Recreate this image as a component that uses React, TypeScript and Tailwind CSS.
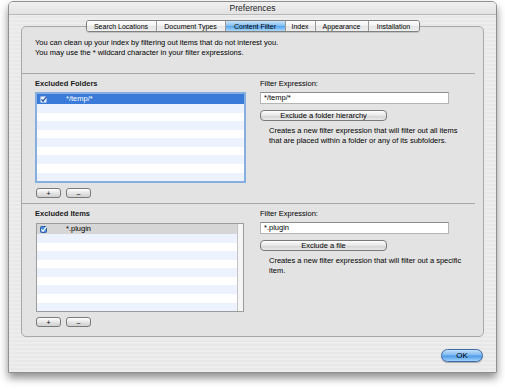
import React from "react";

const tabs = [
  { label: "Search Locations", w: "w-[69px]" },
  { label: "Document Types", w: "w-[69px]" },
  { label: "Content Filter", w: "w-[60px]", active: true },
  { label: "Index", w: "w-[30px]" },
  { label: "Appearance", w: "w-[53px]" },
  { label: "Installation", w: "w-[51px]" },
];

function Check({ onBlue }: { onBlue?: boolean }) {
  return (
    <svg width="7" height="7" viewBox="0 0 7 7" className="shrink-0">
      <rect
        x="0.5"
        y="0.5"
        width="6"
        height="6"
        rx="1"
        fill={onBlue ? "#e8f0fb" : "#4d8fe0"}
        stroke={onBlue ? "#9fb9e0" : "#2f5f9e"}
        strokeWidth="1"
      />
      <path
        d="M1.4 3.4 L3 5.2 L6.6 0.6"
        fill="none"
        stroke={onBlue ? "#1d4f9c" : "#ffffff"}
        strokeWidth="1.2"
      />
    </svg>
  );
}

function ItemList({ item, focused }: { item: string; focused?: boolean }) {
  const rows = Array.from({ length: 9 });
  return (
    <div
      className={
        focused
          ? "w-[211px] h-[91px] border-2 border-[#86aee0] bg-white flex flex-col"
          : "ml-[1px] w-[208px] h-[89px] border border-[#9c9c9c] bg-white flex"
      }
    >
      <div className="flex-1 flex flex-col">
        <div
          className={
            focused
              ? "flex-1 flex items-center pl-[3px] bg-[#3a7ad8] text-white"
              : "flex-1 flex items-center pl-[3px] bg-[#d6d6d6]"
          }
        >
          <Check onBlue={focused} />
          <span className="ml-[19px]">{item}</span>
        </div>
        {rows.map((_, i) => (
          <div key={i} className={i % 2 === 0 ? "flex-1 bg-[#edf3fe]" : "flex-1 bg-white"} />
        ))}
      </div>
      {!focused && <div className="w-[6px] border-l border-[#c4c4c4] bg-[#f6f6f6]" />}
    </div>
  );
}

function SmallButton({ children }: { children: React.ReactNode }) {
  return (
    <div className="w-[25px] h-[10px] rounded-[3px] border border-[#7a7a7a] bg-[linear-gradient(#ffffff,#e3e3e3_55%,#d0d0d0)] flex items-center justify-center leading-none text-[7px]">
      {children}
    </div>
  );
}

function Section({
  title,
  item,
  focused,
  field,
  button,
  desc,
}: {
  title: string;
  item: string;
  focused?: boolean;
  field: string;
  button: string;
  desc: React.ReactNode;
}) {
  return (
    <div className="grid grid-cols-[225px_1fr] pl-[13px]">
      <div className="flex flex-col">
        <div className="mt-[5px] font-bold text-[#1a1a1a]">{title}</div>
        <div className={focused ? "mt-[3px]" : "mt-[4px]"}>
          <ItemList item={item} focused={focused} />
        </div>
        <div className="mt-[5px] ml-[1px] flex gap-[5px]">
          <SmallButton>+</SmallButton>
          <SmallButton>–</SmallButton>
        </div>
      </div>
      <div className="flex flex-col">
        <div className="mt-[5px]">Filter Expression:</div>
        <div className="mt-[3px] w-[189px] h-[12px] bg-white border border-[#b4b4b4] border-t-[#8c8c8c] flex items-center pl-[3px]">
          {field}
        </div>
        <div className="mt-[6px] w-[127px] h-[11px] rounded-[4px] border border-[#7a7a7a] bg-[linear-gradient(#ffffff,#e6e6e6_50%,#d3d3d3_52%,#e9e9e9)] flex items-center justify-center leading-none">
          {button}
        </div>
        <div className="mt-[5px] ml-[9px] w-[200px]">{desc}</div>
      </div>
    </div>
  );
}

export default function App() {
  return (
    <div className="w-[505px] h-[389px] bg-white pl-[8px] pt-[1px] font-['Liberation_Sans',Arial,sans-serif] text-[7.5px] leading-[10px] text-black">
      <div className="w-[489px] h-[372px] rounded-t-[5px] border border-[#8f8f8f] shadow-[0_5px_9px_rgba(0,0,0,0.45)] bg-[repeating-linear-gradient(0deg,#ededed_0px,#ededed_2px,#e8e8e8_2px,#e8e8e8_4px)] flex flex-col overflow-hidden">
        <div className="h-[13px] shrink-0 border-b border-[#b9b9b9] bg-[linear-gradient(#f0f0f0,#e2e2e2)] flex items-center justify-center text-[8.5px] text-[#222]">
          Preferences
        </div>

        <div className="px-[12px] pt-[5px]">
          <div className="relative z-10 flex justify-center">
            <div className="flex h-[12px] rounded-[3px] border border-[#808080] overflow-hidden shadow-[0_1px_1px_rgba(0,0,0,0.15)]">
              {tabs.map((t, i) => (
                <div
                  key={t.label}
                  className={
                    (t.active
                      ? "bg-[linear-gradient(#cbe5fb,#86c1f3_45%,#5aa6ee_55%,#a9d8fc)] "
                      : "bg-[linear-gradient(#ffffff,#f1f1f1_50%,#e4e4e4_52%,#f0f0f0)] ") +
                    (i > 0 ? "border-l border-[#9a9a9a] " : "") +
                    t.w +
                    " flex items-center justify-center text-[7px] leading-none"
                  }
                >
                  {t.label}
                </div>
              ))}
            </div>
          </div>

          <div className="-mt-[6px] h-[311px] rounded-[5px] border border-[#a9a9a9] bg-[#e3e3e3] pt-[11px]">
            <div className="pl-[13px]">
              <div>You can clean up your index by filtering out items that do not interest you.</div>
              <div>You may use the * wildcard character in your filter expressions.</div>
            </div>

            <div className="mt-[15px] mr-[8px] h-px bg-[#a7a7a7]" />
            <Section
              title="Excluded Folders"
              item="*/temp/*"
              focused
              field="*/temp/*"
              button="Exclude a folder hierarchy"
              desc={
                <>
                  Creates a new filter expression that will filter out all items
                  <br />
                  that are placed within a folder or any of its subfolders.
                </>
              }
            />

            <div className="mt-[5px] mr-[8px] h-px bg-[#a7a7a7]" />
            <Section
              title="Excluded Items"
              item="*.plugin"
              field="*.plugin"
              button="Exclude a file"
              desc={
                <>
                  Creates a new filter expression that will filter out a specific
                  <br />
                  item.
                </>
              }
            />
          </div>
        </div>

        <div className="flex justify-end pr-[13px] pt-[12px]">
          <div className="w-[42px] h-[13px] rounded-full border border-[#3f6aa6] bg-[linear-gradient(#c4e1fa,#7db9ef_45%,#4d9ae8_55%,#9fd3fb)] shadow-[0_1px_1px_rgba(0,0,0,0.3)] flex items-center justify-center text-[8px] leading-none">
            OK
          </div>
        </div>
      </div>
    </div>
  );
}
